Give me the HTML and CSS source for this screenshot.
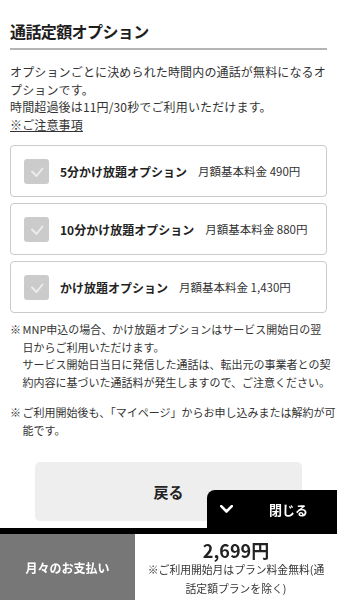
FILE: index.html
```html
<!DOCTYPE html>
<html lang="ja">
<head>
<meta charset="utf-8">
<title>通話定額オプション</title>
<link rel="stylesheet" href="styles.css">
</head>
<body>
<div class="page">
  <h2 class="title">通話定額オプション</h2>
  <p class="desc">オプションごとに決められた時間内の通話が無料になるオプションです。<br>時間超過後は11円/30秒でご利用いただけます。<br><a class="link" href="#">※ご注意事項</a></p>

  <ul class="options">
    <li class="option">
      <span class="check"><svg viewBox="0 0 25 25"><path d="M8 12.5 L12.5 17 L18.5 9.5" fill="none" stroke="#ececec" stroke-width="2" stroke-linecap="round" stroke-linejoin="round"/></svg></span>
      <span class="name">5分かけ放題オプション</span>
      <span class="price">月額基本料金 490円</span>
    </li>
    <li class="option">
      <span class="check"><svg viewBox="0 0 25 25"><path d="M8 12.5 L12.5 17 L18.5 9.5" fill="none" stroke="#ececec" stroke-width="2" stroke-linecap="round" stroke-linejoin="round"/></svg></span>
      <span class="name">10分かけ放題オプション</span>
      <span class="price">月額基本料金 880円</span>
    </li>
    <li class="option">
      <span class="check"><svg viewBox="0 0 25 25"><path d="M8 12.5 L12.5 17 L18.5 9.5" fill="none" stroke="#ececec" stroke-width="2" stroke-linecap="round" stroke-linejoin="round"/></svg></span>
      <span class="name">かけ放題オプション</span>
      <span class="price">月額基本料金 1,430円</span>
    </li>
  </ul>

  <ul class="notes">
    <li><span class="mark">※</span>MNP申込の場合、かけ放題オプションはサービス開始日の翌<br>日からご利用いただけます。<br>サービス開始日当日に発信した通話は、転出元の事業者との契<br>約内容に基づいた通話料が発生しますので、ご注意ください。</li>
    <li><span class="mark">※</span>ご利用開始後も、「マイページ」からお申し込みまたは解約が可<br>能です。</li>
  </ul>

  <div class="back-wrap">
    <button class="back" type="button">戻る</button>
  </div>
</div>

<div class="footer">
  <div class="tab-row">
    <button class="close" type="button">
      <svg viewBox="0 0 13 8"><path d="M1.2 1.2 L6.5 6.5 L11.8 1.2" fill="none" stroke="#fff" stroke-width="2.6" stroke-linecap="round" stroke-linejoin="round"/></svg>
      <span>閉じる</span>
    </button>
  </div>
  <div class="bar-line"></div>
  <div class="summary">
    <div class="label">月々のお支払い</div>
    <div class="amount">
      <div class="total">2,699円</div>
      <div class="sub">※ご利用開始月はプラン料金無料(通<br>話定額プランを除く)</div>
    </div>
  </div>
</div>
</body>
</html>
```
FILE: styles.css
```css
* { box-sizing: border-box; }

body {
  margin: 0;
  font-family: "Noto Sans CJK JP", "Noto Sans", sans-serif;
  color: #333;
  background: #fff;
}

.page {
  padding: 0 10px 130px;
}

.title {
  margin: 0;
  padding: 18px 0 4px;
  font-size: 16px;
  line-height: 26px;
  font-weight: 700;
  letter-spacing: -0.6px;
  color: #1e1e1e;
  border-bottom: 2px solid #b4b4b4;
}

.desc {
  margin: 13px 0 0;
  font-size: 12px;
  line-height: 17.5px;
  letter-spacing: 0.15px;
}

.desc .link {
  color: #333;
  text-decoration: underline;
}

.options {
  list-style: none;
  margin: 12px 0 0;
  padding: 0;
  display: flex;
  flex-direction: column;
  gap: 6px;
}

.option {
  display: flex;
  align-items: center;
  padding: 12.5px 13px;
  border: 1px solid #cacaca;
  border-radius: 4px;
}

.check {
  flex: none;
  width: 25px;
  height: 25px;
  border-radius: 3px;
  background: #cbcbcb;
  display: flex;
}

.check svg {
  width: 25px;
  height: 25px;
}

.name {
  margin-left: 11px;
  font-size: 12px;
  font-weight: 700;
  color: #222;
}

.price {
  margin-left: 11px;
  font-size: 11.5px;
  color: #333;
}

.notes {
  list-style: none;
  margin: 8px 0 0;
  padding: 0;
  font-size: 11px;
  line-height: 17.6px;
}

.notes li {
  padding-left: 12.5px;
  text-indent: -12.5px;
  white-space: nowrap;
}

.notes li + li {
  margin-top: 13px;
}

.notes .mark {
  display: inline-block;
  width: 12.5px;
  text-indent: 0;
}

.back-wrap {
  margin-top: 22px;
  padding: 0 25px;
}

.back {
  width: 100%;
  height: 59px;
  border: none;
  border-radius: 5px;
  background: #eeeeee;
  font-family: "Noto Sans CJK JP", sans-serif;
  font-size: 15px;
  font-weight: 700;
  color: #222;
}

.footer {
  position: fixed;
  left: 0;
  right: 0;
  bottom: 0;
}

.tab-row {
  display: flex;
  justify-content: flex-end;
}

.close {
  width: 130px;
  height: 38px;
  border: none;
  border-top-left-radius: 8px;
  background: #000;
  color: #fff;
  display: flex;
  align-items: center;
  padding: 0 0 0 13px;
  font-family: "Noto Sans CJK JP", sans-serif;
  font-size: 13px;
  font-weight: 700;
}

.close svg {
  width: 13px;
  height: 8px;
  margin-right: 36px;
}

.bar-line {
  height: 6px;
  background: #000;
}

.summary {
  display: flex;
  height: 66px;
}

.label {
  width: 135px;
  flex: none;
  background: #777;
  color: #fff;
  font-size: 12px;
  font-weight: 700;
  display: flex;
  align-items: center;
  justify-content: center;
}

.amount {
  flex: 1;
  background: #fff;
  text-align: center;
  padding: 6px 10px 0;
}

.total {
  font-size: 18px;
  line-height: 20px;
  font-weight: 700;
  color: #222;
}

.sub {
  font-size: 10.8px;
  line-height: 19px;
  color: #333;
}
```
